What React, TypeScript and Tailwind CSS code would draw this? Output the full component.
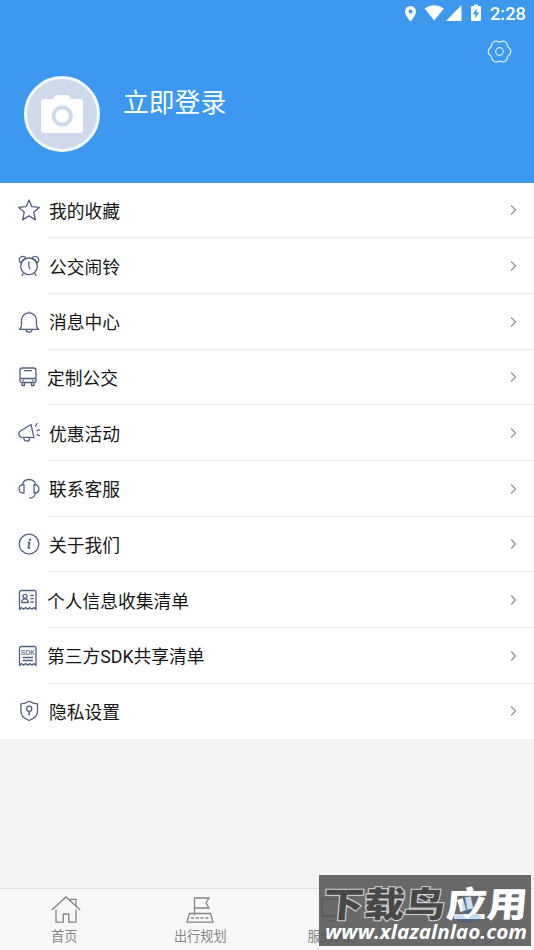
import type { ReactNode } from "react"

const icons: Record<string, ReactNode> = {
    star: <path d="M11 1l2.900 6.700 7.400.7-5.600 4.800 1.700 7.700-6.400-4-6.400 4 1.700-7.700L.7 8.400l7.400-.7z" />,
    alarm: (
        <>
            <circle cx="11" cy="11.300" r="8.300" />
            <path d="M10.800 6.500v5l1.500 2.800M5.300 18.200L3.800 21M16.700 18.200l1.500 2.800" />
            <path d="M2.800 7.800C1 6.700.8 4.200 2 2.700s4.400-2 6 .1c-2.400.9-4.200 2.700-5.200 5zM19.200 7.800c1.800-1.100 2-3.600.8-5.100s-4.400-2-6 .1c2.400.9 4.200 2.700 5.200 5z" />
        </>
    ),
    bell: (
        <>
            <path d="M11 .5V2M1.500 18.300c1.500-1.300 2-2.500 2-4.300V9.300a7.500 7.500 0 0 1 15 0V14c0 1.800.5 3 2 4.300z" />
            <path d="M8 18.800a3 2.400 0 0 0 6 0" />
        </>
    ),
    bus: (
        <>
            <path d="M4 2h11.500q2.500 0 2.500 2.500v10q0 2-2 2H4q-2 0-2-2v-10Q2 2 4 2zM2 12.500h16M6 4.700h8M4 16.500v3h2.500v-3M13.500 16.500v3H16v-3" />
            <path d="M4.500 14.500h1.500M14 14.500h1.500" />
        </>
    ),
    horn: (
        <>
            <path d="M2 9.200L13 2.500l3 13.200-13.500-.6C.7 13.500.5 11 2 9.200zM5.500 15.500l1.200 3.200 4 .3 1-3" />
            <path d="M17.300 4.800L19.300 1M18.500 8.800l3.300-1M18.500 12.300l3.300 1.600" />
        </>
    ),
    headset: (
        <>
            <path d="M4.200 7C5 3.300 7.500 1.500 11 1.500S17 3.300 17.800 7M17.800 14.500c-.6 3.500-2.800 5.500-6.500 5.500" />
            <path d="M6 6.700v8.300c-3.300 0-5-1.400-5-4.100s1.700-4.200 5-4.200zM16 6.700v8.300c3.300 0 5-1.400 5-4.100s-1.700-4.200-5-4.200z" />
        </>
    ),
    info: (
        <>
            <circle cx="11" cy="11" r="9.800" />
            <path d="M9.500 9.500h2L10.300 15h2" strokeWidth="1.700" />
            <circle cx="12" cy="6.700" r=".6" strokeWidth="1.200" />
        </>
    ),
    person: (
        <>
            <path d="M1.500 20.500V3Q1.500 1.500 3 1.500h13.500Q18 1.500 18 3v17.500l-2-2-2.100 1.700-2.100-1.700-2.100 1.700-2.100-1.700-2.100 1.700-2-1.700z" />
            <circle cx="7" cy="7.300" r="2" />
            <path d="M3.700 13.500c0-2.500 1.300-3.700 3.300-3.700s3.300 1.200 3.300 3.700zM12.300 6.500h3.500M12.300 9.700h3.500M12.300 13h3.500" />
        </>
    ),
    sdk: (
        <>
            <path d="M1.500 20.500V3Q1.500 1.500 3 1.500h13.500Q18 1.500 18 3v17.500l-2-2-2.100 1.700-2.100-1.700-2.100 1.700-2.100-1.700-2.100 1.700-2-1.700zM4.500 12.500H15M4.500 15.500H15" />
            <text x="9.800" y="9.500" textAnchor="middle" fontSize="6.500" strokeWidth=".2" fill="#53617f" className="font-['Liberation_Sans',sans-serif]">SDK</text>
        </>
    ),
    shield: (
        <>
            <path d="M11.200 1.200c2.600 1.700 5 2.500 8.300 2.700v7c0 4.700-3.200 7.800-8.300 9.600-5.100-1.800-8.300-4.900-8.300-9.600v-7c3.300-.2 5.700-1 8.300-2.700z" />
            <circle cx="11.200" cy="8.800" r="2.600" />
            <path d="M11.200 11.400v4" strokeWidth="1.700" />
        </>
    ),
}

const menu = [
    { icon: "star", label: "我的收藏" },
    { icon: "alarm", label: "公交闹铃" },
    { icon: "bell", label: "消息中心" },
    { icon: "bus", label: "定制公交", tight: true },
    { icon: "horn", label: "优惠活动" },
    { icon: "headset", label: "联系客服" },
    { icon: "info", label: "关于我们" },
    { icon: "person", label: "个人信息收集清单", tight: true },
    { icon: "sdk", label: "第三方SDK共享清单", tight: true },
    { icon: "shield", label: "隐私设置" },
]

// six soft lobes around (12.5, 12.5)
const gearPoints = Array.from({ length: 6 }).flatMap((_, i) =>
    [[-13, 11.6], [13, 11.6], [30, 9]].map(([deg, r]) => {
        const a = ((i * 60 + deg) * Math.PI) / 180
        return [12.5 + r * Math.cos(a), 12.5 + r * Math.sin(a)]
    })
)
const gearPath =
    gearPoints
        .map(([x, y], i) => {
            const [nx, ny] = gearPoints[(i + 1) % gearPoints.length]
            const [px, py] = gearPoints[(i + gearPoints.length - 1) % gearPoints.length]
            const start = i === 0 ? `M${(px + x) / 2} ${(py + y) / 2}` : ""
            return `${start}Q${x} ${y} ${(x + nx) / 2} ${(y + ny) / 2}`
        })
        .join("") + "z"

function StatusBar() {
    return (
        <div className="flex h-7 items-center justify-end pr-[6px] text-white">
            <svg width="96" height="28" viewBox="0 0 96 28" fill="currentColor">
                <path fillRule="evenodd" d="M17.500 6a5.500 5.500 0 0 0-5.500 5.500c0 4 5.500 10 5.500 10s5.500-6 5.500-10A5.500 5.500 0 0 0 17.500 6zm0 3.600a1.900 1.900 0 1 1 0 3.800 1.900 1.900 0 0 1 0-3.800z" />
                <path d="M31.500 8.500q9.700-6.500 19.400 0L41.200 20.500zM53 21L68.500 5v16z" />
                <path fillRule="evenodd" d="M81 4.500h4V6h2q1 0 1 1v13q0 1-1 1h-8q-1 0-1-1V7q0-1 1-1h2zM83.500 8.500l-3.700 5.800h2.500v4.200l3.700-6h-2.500z" />
            </svg>
            <span className="ml-[1px] w-[38px] whitespace-nowrap font-[Roboto,sans-serif] text-[18.200px] font-medium leading-7">2:28</span>
        </div>
    )
}

function Header() {
    return (
        <header className="h-[182.500px] shrink-0 bg-[#3c99ef]">
            <StatusBar />
            <div className="flex h-[47.500px] justify-end pr-[22px] pt-[10.500px]">
                <svg width="25" height="25" viewBox="0 0 25 25" fill="none" stroke="#e5f2ff" strokeWidth="1.200" strokeLinejoin="round">
                    <path d={gearPath} />
                    <circle cx="12.500" cy="12.500" r="3.800" />
                </svg>
            </div>
            <div className="flex pl-6">
                <div className="flex size-[76px] items-center justify-center rounded-full border-[3px] border-[#f5f9ff] bg-[#cedaeb]">
                    <svg width="44" height="40" viewBox="0 0 44 40">
                        <path d="M4 5h9l2.500-3.500Q16.500 1 18 1h9q1.500 0 2.200 1L31 5h9q3 0 3 3v28q0 3-3 3H4q-3 0-3-3V8q0-3 3-3z" fill="#fff" />
                        <circle cx="22.300" cy="22" r="8.700" fill="none" stroke="#cedaeb" strokeWidth="3.800" />
                    </svg>
                </div>
                <h1 className="ml-[23px] mt-[8.500px] text-[25.800px] leading-[38px] text-white">立即登录</h1>
            </div>
        </header>
    )
}

function TabBar() {
    return (
        <nav className="grid h-[62px] shrink-0 grid-cols-4 border-t border-[#dedede] bg-[#f7f7f7] text-[13.200px] leading-5 text-[#858585]">
            <div className="flex flex-col items-center pr-[5px] pt-[6px]">
                <svg className="ml-[4px]" width="30" height="31" viewBox="0 0 30 31" fill="none" stroke="currentColor" strokeWidth="1.300">
                    <path d="M.8 15L15 2l14.200 13M5 14.500v12.700h7.300V19h5.400v8.200H25V14.500M19.500 5.500V4.300H25v6.500" />
                </svg>
                <span className="mt-[1px]">首页</span>
            </div>
            <div className="flex flex-col items-center pt-[6px]">
                <svg width="30" height="31" viewBox="0 0 30 31" fill="none" stroke="currentColor" strokeWidth="1.300">
                    <path d="M9.500 20V3H24l-3 5 3 5H9.500M4.500 18.500h21l2.500 8.700H2z" />
                    <path d="M6 23h19" strokeDasharray="3 1.800" />
                </svg>
                <span className="mt-[1px]">出行规划</span>
            </div>
            <div className="flex flex-col items-center pt-[6px]">
                <svg width="30" height="31" viewBox="0 0 30 31" fill="none" stroke="currentColor" strokeWidth="1.300">
                    <path d="M3 4h24v17H3zM10 26h10" />
                </svg>
                <span className="mt-[1px]">服务大厅</span>
            </div>
            <div className="flex flex-col items-center pt-[6px] text-[#3c99ef]">
                <svg width="30" height="31" viewBox="0 0 30 31" fill="currentColor">
                    <ellipse cx="15" cy="10" rx="6" ry="8" />
                    <path d="M1 24q1-5 9-5l5 6 5-6q8 0 9 5-14 7-28 0z" />
                </svg>
                <span className="mt-[1px]">个人中心</span>
            </div>
        </nav>
    )
}

function Watermark() {
    return (
        <div className="absolute left-[319px] top-[875px] h-[71px] w-[212px] bg-[#505050]/85">
            <svg width="212" height="71" viewBox="0 0 212 71" className="overflow-visible font-['Noto_Sans_CJK_SC',sans-serif]">
                <g transform="skewX(-5)" fontSize="35" fontWeight="900">
                    <text transform="translate(7 42) scale(1.16 1)" fill="#484848" stroke="#d8d8d8" strokeWidth="2" paintOrder="stroke">下载鸟</text>
                    <text transform="translate(130 42) scale(1.16 1)" fill="#fff">应用</text>
                </g>
                <g fill="#4f91cf" opacity=".3">
                    <ellipse cx="148.500" cy="30" rx="5.500" ry="9" />
                    <path d="M134 43q1-4 9-4l5.500 5 5.500-5q8 0 9 4-14.500 7-29 0z" />
                </g>
                <text x="6" y="63.500" textLength="202" lengthAdjust="spacingAndGlyphs" fontSize="20" fontWeight="700" fontStyle="italic" fill="#fff" className="font-['Open_Sans',sans-serif]">www.xlazalnlao.com</text>
            </svg>
        </div>
    )
}

export default function App() {
    return (
        <div className="relative flex h-[950px] w-[534px] flex-col overflow-hidden bg-[#f4f4f4] font-[Roboto,'Noto_Sans_CJK_SC',sans-serif]">
            <Header />
            <main className="flex h-[556.700px] shrink-0 flex-col bg-white">
                {menu.map((item, i) => (
                    <div key={item.icon} className="relative flex flex-1 items-center pl-[18px] pr-[15px]">
                        <svg width="22" height="22" viewBox="0 0 22 22" fill="none" stroke="#53617f" strokeWidth="1.300" strokeLinejoin="round" className="shrink-0">
                            {icons[item.icon]}
                        </svg>
                        <span className={`${item.tight ? "ml-[7px]" : "ml-[9px]"} flex-1 pt-[3.500px] text-[17.750px] leading-6 text-[#161616]`}>{item.label}</span>
                        <svg width="12" height="12" viewBox="0 0 12 12" fill="none" stroke="#999" strokeWidth="1.400">
                            <path d="M4 1.500L8.500 6 4 10.500" />
                        </svg>
                        {i < menu.length - 1 && <div className="absolute bottom-0 left-[49px] right-0 h-px bg-[#ededed]" />}
                    </div>
                ))}
            </main>
            <div className="flex-1" />
            <TabBar />
            <Watermark />
        </div>
    )
}
